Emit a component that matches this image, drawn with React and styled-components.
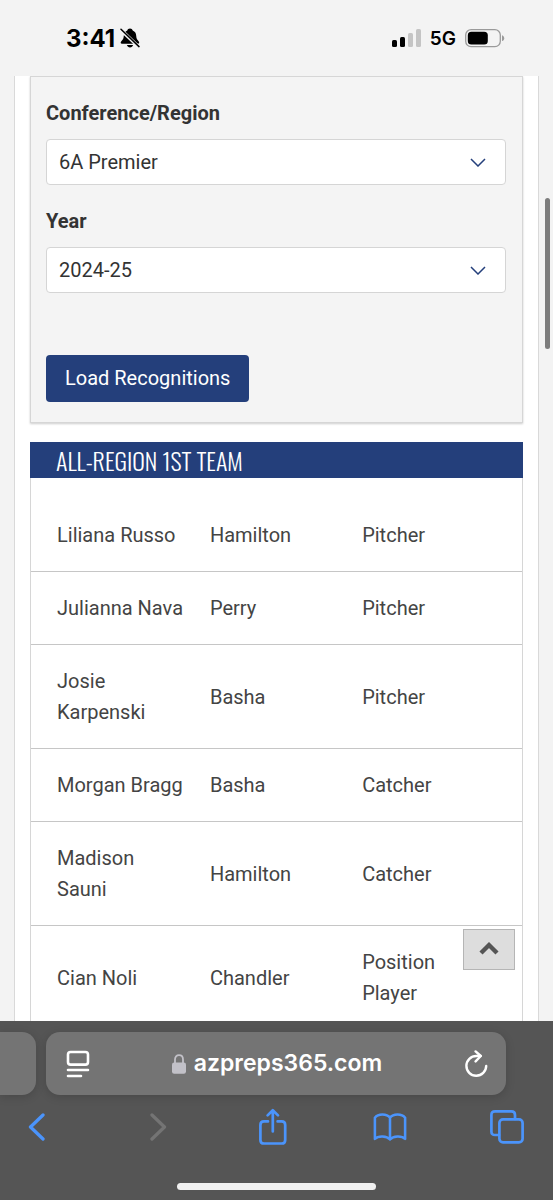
import { useState } from "react";
import styled, { createGlobalStyle } from "styled-components";

const GlobalStyle = createGlobalStyle`
  * {
    box-sizing: border-box;
  }

  body {
    margin: 0;
    background-color: #f3f3f3;
    color: #444;
    font-family: Roboto, "Open Sans", sans-serif;
    font-size: 20px;
    line-height: 31px;
  }
`;

const Phone = styled.div`
  display: flex;
  flex-direction: column;
  height: 100vh;
  overflow: hidden;
`;

const StatusBar = styled.header`
  display: flex;
  justify-content: space-between;
  align-items: center;
  height: 76px;
  flex-shrink: 0;
  padding: 0 48px 0 66px;
  color: #000;
  font-family: Inter, "Liberation Sans", sans-serif;
`;

const StatusGroup = styled.div`
  display: flex;
  align-items: center;
  gap: ${(props) => props.$gap};
`;

const Time = styled.time`
  font-size: 24px;
  font-weight: 700;
`;

const Network = styled.span`
  font-size: 19px;
  font-weight: 600;
`;

const Viewport = styled.main`
  position: relative;
  flex: 1;
  min-height: 0;
  overflow: hidden;
`;

const Page = styled.div`
  margin: 0 14px;
  padding: 0 15px;
  min-height: 100%;
  background-color: #fff;
  border: 1px solid #d9d9d9;
  border-width: 0 1px;
`;

const FilterPanel = styled.form`
  display: flex;
  flex-direction: column;
  align-items: stretch;
  padding: 23px 16px 20px 15px;
  background-color: #f4f4f4;
  border: 1px solid #d6d6d6;
  box-shadow: 0 1px 2px rgb(0, 0, 0, 0.2);
`;

const Field = styled.div`
  display: flex;
  flex-direction: column;
  gap: 13px;
  margin-bottom: 23px;
`;

const Label = styled.label`
  color: #333;
  font-weight: 700;
  line-height: 26px;
`;

const SelectWrap = styled.div`
  display: grid;
  align-items: center;

  > * {
    grid-area: 1 / 1;
  }

  svg {
    justify-self: end;
    margin-right: 20px;
    pointer-events: none;
  }
`;

const Select = styled.select`
  appearance: none;
  width: 100%;
  height: 46px;
  padding: 0 44px 0 12px;
  background-color: #fff;
  border: 1px solid #d5d5d5;
  border-radius: 4px;
  color: #333;
  font: inherit;
`;

const LoadButton = styled.button`
  align-self: flex-start;
  height: 47px;
  margin-top: 39px;
  padding: 0 19px 1px;
  background-color: #243f7b;
  border: 0;
  border-radius: 4px;
  color: #fff;
  font: inherit;
  cursor: pointer;
`;

const TeamHeading = styled.h2`
  margin: 19px 0 0;
  padding: 0 26px;
  background-color: #243f7b;
  color: #fff;
  font-family: Oswald, "Roboto Condensed", "Liberation Sans Narrow", sans-serif;
  font-size: 24px;
  font-weight: 300;
  line-height: 36px;
  text-transform: uppercase;
`;

const TeamBody = styled.div`
  padding-top: 21px;
  border: 1px solid #d6d6d6;
  border-width: 0 1px;
`;

const TeamTable = styled.table`
  width: 100%;
  table-layout: fixed;
  border-spacing: 0;
`;

const Cell = styled.td`
  width: ${(props) => props.$width};
  padding: 21px 12px 20px;
  border-bottom: 1px solid #c6c6c6;

  &:first-child {
    padding-left: 26px;
  }

  &:last-child {
    padding-right: 30px;
  }
`;

const ToTop = styled.button`
  position: absolute;
  right: 38px;
  bottom: 51px;
  display: flex;
  justify-content: center;
  align-items: center;
  width: 52px;
  height: 41px;
  padding: 0 0 4px;
  background-color: #ddd;
  border: 1px solid #b5b5b5;
  cursor: pointer;
`;

const ScrollThumb = styled.div`
  position: absolute;
  top: 122px;
  right: 3px;
  width: 5px;
  height: 151px;
  background-color: #7c7c7c;
  border-radius: 3px;
`;

const BrowserBar = styled.footer`
  display: flex;
  flex-direction: column;
  flex-shrink: 0;
  padding: 11px 0 10px;
  background-color: #555;
  font-family: Inter, "Liberation Sans", sans-serif;
`;

const TabStrip = styled.div`
  display: flex;
  gap: 10px;
  padding-right: 47px;
`;

const PreviousTab = styled.div`
  width: 36px;
  background-color: #747474;
  border-radius: 0 14px 14px 0;
  box-shadow: 0 2px 10px rgb(0, 0, 0, 0.16);
`;

const AddressBar = styled.div`
  display: flex;
  flex: 1;
  justify-content: space-between;
  align-items: center;
  height: 63px;
  padding: 0 16px 0 18px;
  background-color: #747474;
  border-radius: 14px;
  box-shadow: 0 2px 10px rgb(0, 0, 0, 0.16);
  color: #fff;
`;

const Address = styled.a`
  display: flex;
  align-items: center;
  gap: 8px;
  color: #fff;
  font-size: 23px;
  font-weight: 600;
  text-decoration: none;
`;

const IconButton = styled.button`
  display: flex;
  justify-content: center;
  align-items: center;
  width: ${(props) => props.$size || "28px"};
  height: 40px;
  padding: 0;
  background: none;
  border: 0;
  color: inherit;
  cursor: pointer;

  &:disabled {
    color: #747474;
    cursor: default;
  }
`;

const Toolbar = styled.nav`
  display: flex;
  justify-content: space-between;
  padding: 12px 29px 0 20px;
  color: #4b94fb;
`;

const HomeIndicator = styled.div`
  align-self: center;
  width: 36%;
  height: 7px;
  margin-top: 36px;
  background-color: #f0f0f0;
  border-radius: 4px;
`;

const Stroke = ({ width, height, weight = 3, children }) => (
  <svg
    width={width}
    height={height}
    viewBox={`0 0 ${width} ${height}`}
    fill="none"
    stroke="currentColor"
    strokeWidth={weight}
    strokeLinecap="round"
    strokeLinejoin="round"
    aria-hidden="true"
  >
    {children}
  </svg>
);

const BellOff = () => (
  <svg width="20" height="20" viewBox="0 0 20 20" aria-hidden="true">
    <path
      d="M10 0.5C8.6 0.5 7.5 1.3 7.3 2.5C4.9 3.5 3.9 5.4 3.8 7.7C3.7 10.6 2.9 11.6 1.3 13.2C0.2 14.5 0.6 15.7 2 15.7H17.8C19.2 15.7 19.7 14.5 18.6 13.2C17.1 11.6 16.3 10.6 16.2 7.7C16.1 5.4 15.1 3.5 12.7 2.5C12.4 1.3 11.4 0.5 10 0.5Z"
      fill="#000"
    />
    <path d="M6.9 16.9H13.1C12.6 18.5 11.5 19.4 10 19.4C8.5 19.4 7.4 18.5 6.9 16.9Z" fill="#000" />
    <path d="M0.6 1.6L19.1 19.2" stroke="#f3f3f3" strokeWidth="3.4" />
    <path d="M1 1.3L19 18.6" stroke="#000" strokeWidth="1.5" strokeLinecap="round" />
  </svg>
);

const Signal = () => (
  <svg width="29" height="18" viewBox="0 0 29 18" aria-hidden="true">
    <rect x="0" y="11" width="5" height="7" rx="1.5" fill="#000" />
    <rect x="8" y="8" width="5" height="10" rx="1.5" fill="#000" />
    <rect x="16" y="4" width="5" height="14" rx="1.5" fill="#c4c4c4" />
    <rect x="24" y="0" width="5" height="18" rx="1.5" fill="#c4c4c4" />
  </svg>
);

const Battery = () => (
  <svg width="40" height="19" viewBox="0 0 40 19" aria-hidden="true">
    <rect x="0.7" y="0.7" width="34.6" height="17" rx="5.4" fill="none" stroke="#9a9a9a" strokeWidth="1.3" />
    <rect x="2.8" y="2.8" width="20" height="12.8" rx="3.6" fill="#000" />
    <path d="M37 6.3C38.5 6.8 39.2 7.9 39.2 9.2C39.2 10.5 38.5 11.6 37 12.1Z" fill="#9a9a9a" />
  </svg>
);

const ChevronDown = () => (
  <svg width="16" height="9" viewBox="0 0 16 9" fill="none" aria-hidden="true">
    <path d="M1 1L8 8L15 1" stroke="#243f7b" strokeWidth="1.5" />
  </svg>
);

const Lock = () => (
  <svg width="14" height="20" viewBox="0 0 14 20" aria-hidden="true">
    <path d="M3 9V5.5C3 2.8 4.6 1.2 7 1.2C9.4 1.2 11 2.8 11 5.5V9" fill="none" stroke="#c2c1c8" strokeWidth="1.8" />
    <rect x="0" y="8.4" width="14" height="11.4" rx="2.2" fill="#c2c1c8" />
  </svg>
);

const players = [
  { name: "Liliana Russo", school: "Hamilton", position: "Pitcher" },
  { name: "Julianna Nava", school: "Perry", position: "Pitcher" },
  { name: "Josie Karpenski", school: "Basha", position: "Pitcher" },
  { name: "Morgan Bragg", school: "Basha", position: "Catcher" },
  { name: "Madison Sauni", school: "Hamilton", position: "Catcher" },
  { name: "Cian Noli", school: "Chandler", position: "Position Player" },
];

const SelectField = ({ id, label, options }) => {
  const [value, setValue] = useState(options[0]);

  return (
    <Field>
      <Label htmlFor={id}>{label}</Label>
      <SelectWrap>
        <Select id={id} value={value} onChange={(e) => setValue(e.target.value)}>
          {options.map((option) => (
            <option key={option}>{option}</option>
          ))}
        </Select>
        <ChevronDown />
      </SelectWrap>
    </Field>
  );
};

const App = () => {
  return (
    <Phone>
      <GlobalStyle />
      <StatusBar>
        <StatusGroup $gap="5px">
          <Time>3:41</Time>
          <BellOff />
        </StatusGroup>
        <StatusGroup $gap="9px">
          <Signal />
          <Network>5G</Network>
          <Battery />
        </StatusGroup>
      </StatusBar>

      <Viewport>
        <Page>
          <FilterPanel onSubmit={(e) => e.preventDefault()}>
            <SelectField id="region" label="Conference/Region" options={["6A Premier"]} />
            <SelectField id="year" label="Year" options={["2024-25"]} />
            <LoadButton type="submit">Load Recognitions</LoadButton>
          </FilterPanel>

          <TeamHeading>All-Region 1st Team</TeamHeading>
          <TeamBody>
            <TeamTable>
              <tbody>
                {players.map((player) => (
                  <tr key={player.name}>
                    <Cell $width="34%">{player.name}</Cell>
                    <Cell $width="31%">{player.school}</Cell>
                    <Cell $width="35%">{player.position}</Cell>
                  </tr>
                ))}
              </tbody>
            </TeamTable>
          </TeamBody>
        </Page>
        <ToTop type="button" aria-label="Back to top">
          <svg width="20" height="14" viewBox="0 0 20 14" fill="none" aria-hidden="true">
            <path d="M2 12L10 4L18 12" stroke="#555" strokeWidth="4.4" />
          </svg>
        </ToTop>
        <ScrollThumb />
      </Viewport>

      <BrowserBar>
        <TabStrip>
          <PreviousTab />
          <AddressBar>
            <IconButton type="button" aria-label="Page settings">
              <Stroke width={24} height={28} weight={2.6}>
                <rect x="2" y="2" width="20" height="12.6" rx="2.6" />
                <path d="M2 20H22M2 26H15" />
              </Stroke>
            </IconButton>
            <Address href="#">
              <Lock />
              azpreps365.com
            </Address>
            <IconButton type="button" aria-label="Reload">
              <Stroke width={24} height={28} weight={2.4}>
                <path d="M22.2 16A9.9 9.9 0 1 1 12.4 6H16.6" />
                <path d="M11.6 1.4L16.8 6L11.6 11.4" />
              </Stroke>
            </IconButton>
          </AddressBar>
        </TabStrip>
        <Toolbar>
          <IconButton $size="34px" type="button" aria-label="Back">
            <Stroke width={18} height={28} weight={3.3}>
              <path d="M15 2L2.5 14L15 26" />
            </Stroke>
          </IconButton>
          <IconButton $size="34px" type="button" aria-label="Forward" disabled>
            <Stroke width={24} height={28} weight={3.3}>
              <path d="M9 2L21.5 14L9 26" />
            </Stroke>
          </IconButton>
          <IconButton $size="34px" type="button" aria-label="Share">
            <Stroke width={30} height={38} weight={2.7}>
              <path d="M11 13.4H7C4.6 13.4 3.4 14.6 3.4 17V31.9C3.4 34.3 4.6 35.5 7 35.5H24.6C27 35.5 28.2 34.3 28.2 31.9V17C28.2 14.6 27 13.4 24.6 13.4H20.6" />
              <path d="M15.8 23.4V2.4M10.6 7.4L15.8 2.2L21 7.4" />
            </Stroke>
          </IconButton>
          <IconButton $size="34px" type="button" aria-label="Bookmarks">
            <Stroke width={36} height={30} weight={2.7}>
              <path d="M18 5.2C14.6 0.6 5.4 0.6 2 5.2V27.6C5.4 24.2 14.6 24.2 18 28.2C21.4 24.2 30.6 24.2 34 27.6V5.2C30.6 0.6 21.4 0.6 18 5.2ZM18 5.2V28" />
            </Stroke>
          </IconButton>
          <IconButton $size="34px" type="button" aria-label="Tabs">
            <Stroke width={34} height={34} weight={2.7}>
              <rect x="9.4" y="9.4" width="23.2" height="23" rx="3.6" />
              <path d="M9 25H5C2.6 25 1.4 23.8 1.4 21.4V5C1.4 2.6 2.6 1.4 5 1.4H21.4C23.8 1.4 25 2.6 25 5V9" />
            </Stroke>
          </IconButton>
        </Toolbar>
        <HomeIndicator />
      </BrowserBar>
    </Phone>
  );
};

export default App;
